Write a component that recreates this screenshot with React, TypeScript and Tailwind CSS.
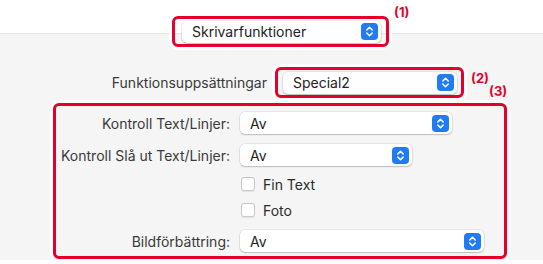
import React from "react";

const Stepper = () => (
  <svg width="17" height="17" viewBox="0 0 17 17" className="shrink-0">
    <rect x="0" y="0" width="17" height="17" rx="4" fill="#1f7cf6" />
    <polyline points="5.8,7 8.5,4.3 11.2,7" fill="none" stroke="#fff" strokeWidth="1.6" strokeLinecap="round" strokeLinejoin="round" />
    <polyline points="5.8,10 8.5,12.7 11.2,10" fill="none" stroke="#fff" strokeWidth="1.6" strokeLinecap="round" strokeLinejoin="round" />
  </svg>
);

interface PopupProps {
  value: string;
  width: string;
}

const Popup = ({ value, width }: PopupProps) => (
  <div
    className={`${width} h-[22px] flex items-center justify-between pl-[10px] pr-[3px] bg-white rounded-[5px] shadow-[0_0_0_0.5px_rgba(0,0,0,0.12),0_1px_1.5px_rgba(0,0,0,0.18)] text-[14px] text-[#232323]`}
  >
    <span>{value}</span>
    <Stepper />
  </div>
);

const Mark = ({ n }: { n: number }) => (
  <div className="text-[13px] font-bold leading-[13px] text-[#e4002b]">({n})</div>
);

const Checkbox = ({ label }: { label: string }) => (
  <div className="flex items-center h-[22px] ml-[185px]">
    <div className="w-[14px] h-[14px] bg-white rounded-[3px] border border-[#c9c9c9] shadow-[0_0.5px_1px_rgba(0,0,0,0.08)]" />
    <span className="ml-[8px] text-[14px] text-[#2b2b2b]">{label}</span>
  </div>
);

const Row = ({ label, children }: { label: string; children: React.ReactNode }) => (
  <div className="flex items-center h-[22px]">
    <span className="w-[174px] text-right text-[14px] text-[#3a3a3a]">{label}</span>
    <div className="ml-[10px]">{children}</div>
  </div>
);

export default function App() {
  return (
    <div
      className="w-[543px] h-[264px] overflow-hidden flex flex-col bg-[linear-gradient(to_bottom,#fff_33px,#e4e4e4_33px,#e4e4e4_34px,#f5f5f5_34px,#f5f5f5_260px,#fff_260px)]"
      style={{ fontFamily: "Inter, 'Liberation Sans', sans-serif" }}
    >
      {/* top: Skrivarfunktioner */}
      <div className="flex items-start pt-[6px] pl-[172px]">
        <div className="mt-[10px] w-[217px] h-[31px] flex items-center pl-[7px] pr-[5px] border-[3px] border-[#e4002b] rounded-[6px] shadow-[0_0_0_3px_#fff]">
          <Popup value="Skrivarfunktioner" width="w-[199px]" />
        </div>
        <div className="ml-[5px]">
          <Mark n={1} />
        </div>
      </div>

      {/* Funktionsuppsättningar */}
      <div className="flex items-start h-[31px] mt-[20px]">
        <span className="w-[270px] h-[31px] flex items-center justify-end pr-[3px] text-[14px] text-[#3a3a3a]">
          Funktionsuppsättningar
        </span>
        <div className="ml-[5px] w-[189px] h-[31px] flex items-center pl-[5px] pr-[4px] border-[3px] border-[#e4002b] rounded-[6px] shadow-[0_0_0_3px_#fff]">
          <Popup value="Special2" width="w-[174px]" />
        </div>
        <div className="ml-[7px] mt-[5px]">
          <Mark n={2} />
        </div>
        <div className="mt-[18px]">
          <Mark n={3} />
        </div>
      </div>

      {/* settings */}
      <div className="mt-[5px] ml-[53px] w-[454px] h-[156px] flex flex-col pt-[6px] border-[3px] border-[#e4002b] rounded-[6px] shadow-[0_0_0_3px_#fff]">
        <Row label="Kontroll Text/Linjer:">
          <Popup value="Av" width="w-[212px]" />
        </Row>
        <div className="mt-[10px]">
          <Row label="Kontroll Slå ut Text/Linjer:">
            <Popup value="Av" width="w-[172px]" />
          </Row>
        </div>
        <div className="mt-[7px]">
          <Checkbox label="Fin Text" />
        </div>
        <div className="mt-[4px]">
          <Checkbox label="Foto" />
        </div>
        <div className="mt-[9px]">
          <Row label="Bildförbättring:">
            <Popup value="Av" width="w-[244px]" />
          </Row>
        </div>
      </div>
    </div>
  );
}
